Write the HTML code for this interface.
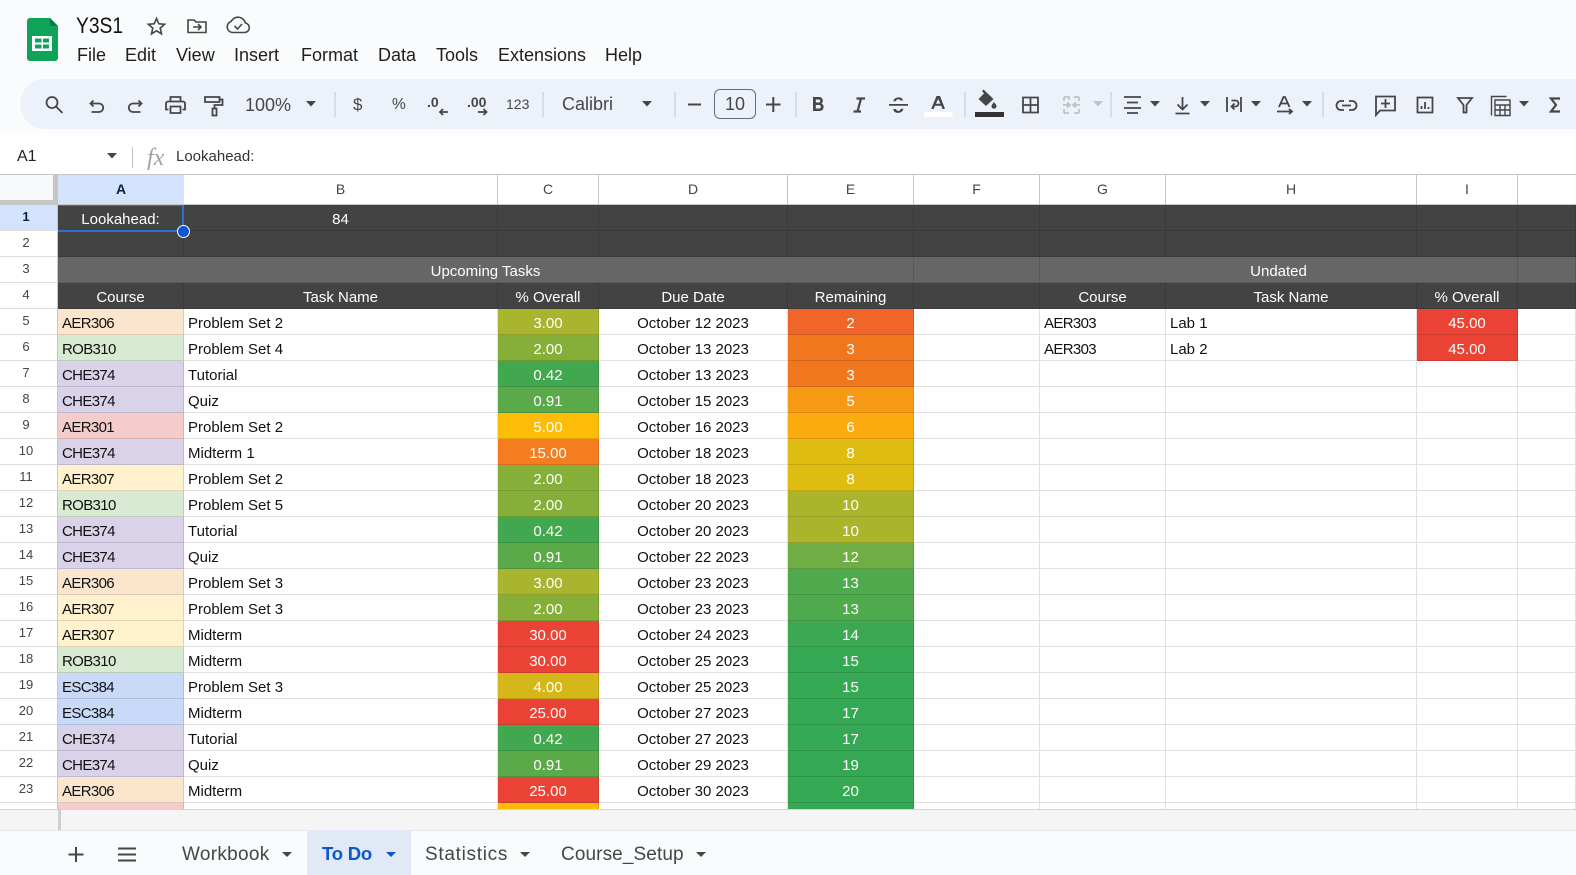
<!DOCTYPE html>
<html><head><meta charset="utf-8"><title>Y3S1</title>
<style>
*{box-sizing:border-box}
html,body{margin:0;padding:0;width:1576px;height:875px;overflow:hidden;background:#f9fbfd;font-family:"Liberation Sans",sans-serif;color:#1f1f1f}
.t{position:absolute;white-space:nowrap;line-height:1}
.m{font-size:18px;color:#1f1f1f;top:46px}
.tb{position:absolute;left:20px;top:79px;width:1556px;height:50px;background:#edf2fa;border-radius:25px 0 0 25px}
.fade{position:absolute;left:0;top:129px;width:1576px;height:10px;background:linear-gradient(#f9fbfd,#fff)}
.fb{position:absolute;left:0;top:139px;width:1576px;height:35px;background:#fff}
.g{color:#444746}
.colh{position:absolute;top:174px;height:31px;background:#fff;border-top:1px solid #c4c7c5;border-right:1px solid #c4c7c5;border-bottom:1px solid #c4c7c5;text-align:center;font-size:14px;line-height:28px;color:#444}
.wrap{position:absolute;left:0;top:205px;width:1576px;height:604px;overflow:hidden;background:#fff}
table{border-collapse:separate;border-spacing:0;table-layout:fixed;width:1576px;font-size:15px;color:#111}
td{height:26px;padding:4px 4px 0;border-right:1px solid rgba(0,0,0,.12);border-bottom:1px solid rgba(0,0,0,.12);white-space:nowrap;overflow:hidden;line-height:21px}
td.r{background:#fff;color:#444;font-size:13px;text-align:center;padding:0 5px 2px 0;border-right:1px solid #c4c7c5;border-bottom:1px solid #ddd;line-height:23px}
td.c{text-align:center}
.d td:not(.r){background:#434343;color:#fff;text-align:center}
.e td:not(.r){background:#666;color:#fff;text-align:center}
td.v{color:#fff;text-align:center}
.a6,.rb,.ch,.a1,.a7,.es,.k{letter-spacing:-.65px}
.a6{background:#fce5cd}.rb{background:#d9ead3}.ch{background:#d9d2e9}.a1{background:#f4cccc}.a7{background:#fff2cc}.es{background:#c9daf8}
.tabs{position:absolute;left:0;top:830px;width:1576px;height:45px;background:#f9fbfd;border-top:1px solid #e6e8ea}
.tab{font-size:19px;color:#444746;top:845px;letter-spacing:.4px}
svg{position:absolute;left:0;top:0;overflow:visible}
</style></head>
<body>
<svg width="1576" height="140" style="z-index:3">
<path d="M30 18h20l8 8v32a3 3 0 0 1-3 3H30a3 3 0 0 1-3-3V21a3 3 0 0 1 3-3z" fill="#0fa35a"/>
<path d="M50 18l8 8h-8z" fill="#0b7a43"/>
<path d="M32 36h20v15H32zM35 38.500v4h6.500v-4zM43 38.500v4h6v-4zM35 44.500v4h6.500v-4zM43 44.500v4h6v-4z" fill="#fff" fill-rule="evenodd"/>
<g fill="none" stroke="#444746" stroke-width="1.600">
<path d="M156.500 18.500l2.300 5.300 5.800.5-4.400 3.800 1.300 5.700-5-3-5 3 1.300-5.700-4.400-3.800 5.800-.5z"/>
<path d="M188 32.500V20h6l2 2h10v10.500z"/><path d="M193 27h8M198 24l3 3-3 3"/>
<path d="M232 32.500h12.500a4.800 4.800 0 0 0 1-9.500 7.800 7.800 0 0 0-14.500-1.500 5.700 5.700 0 0 0 1 11z"/><path d="M234.500 26l3 3 4.500-5"/>
</g>
<g fill="none" stroke="#444746" stroke-width="1.800">
<circle cx="52" cy="102.500" r="5.500"/><path d="M56 106.500l6.500 6.500"/>
<path d="M93.500 100.500l-3 3 3 3M90.500 103.500h8.500a4 4 0 0 1 0 8.500h-7.500"/>
<path d="M138.500 100.500l3 3-3 3M141.500 103.500H133a4 4 0 0 0 0 8.500h7.500"/>
<path d="M170.500 102v-5h10v5M168.500 109.500H166v-6a2 2 0 0 1 2-2h15a2 2 0 0 1 2 2v6h-2.500M170.500 106.500h10v6.500h-10z"/>
<path d="M205 97h14.500v5H205zM219.500 99.500h3v5.500h-8v3.500M212.500 108.500h4v7h-4z"/>
<path d="M688 104.500h13M766 104.500h14.500M773.300 97v15" stroke-width="2"/>
<path d="M1023 97.500h15v15h-15zM1030.500 97.500v15M1023 105h15"/>
<path d="M1124 97h17M1127 102.500h11M1124 108h17M1127 113h11"/>
<path d="M1182.500 97v12M1177.500 104.500l5 5 5-5M1175.500 113.500h14"/>
<path d="M1227 97v15M1241 97v15M1231.500 100.500h4a3 3 0 0 1 0 6h-3.500M1234.500 103.500l-3 3 3 3"/>
<path d="M1279 107l4.500-10h1.500l4.500 10M1280.500 103.500h7.500M1277 111.500h14M1289 109l3 2.500-3 2.500"/>
<path d="M1344 101h-3a4.500 4.500 0 0 0 0 9h3M1349 101h3a4.500 4.500 0 0 1 0 9h-3M1342 105.500h9"/>
<path d="M1376 96.500h19v14h-15l-4 4.500zM1385.500 99v9M1381 103.500h9"/>
<path d="M1417.500 97.500h15v15h-15zM1421.500 109v-3M1425 109v-7M1428.500 109v-2"/>
<path d="M1458 98h14l-5.500 7v7.500h-3V105z"/>
<path d="M1491.500 115.500V96.500h15M1495 100h15v15.500h-15zM1495 105h15M1495 110h15M1500 105v10.500M1505 105v10.500" stroke-width="1.400"/>
<path d="M1560 98.500h-9l5 6.500-5 6.500h9" stroke-width="2.200"/>
<path d="M448 112h-8M443 109l-3 3 3 3"/>
<path d="M478 112h8.500M483.500 109l3 3-3 3"/>
<path d="M856.500 98.500h8.500M861 98.500l-3.500 13M853.500 111.500h7.500" stroke-width="2.200"/>
</g>
<g fill="none" stroke="#bfc3c6" stroke-width="1.800">
<path d="M1064 97h5v3M1064 97v4M1064 113h5M1064 113v-4M1079 97h-5M1079 97v4M1079 113h-5M1079 113v-4M1063 105h6M1067 102.500l3 2.500-3 2.500M1080 105h-6M1076 102.500l-3 2.500 3 2.500"/>
</g>
<g fill="#444746">
<path d="M813 97h6a3.700 3.700 0 0 1 2.500 6.500 4 4 0 0 1-2 7.500H813zM815.800 99.500v3h3a1.500 1.500 0 0 0 0-3zM815.800 105v3.500h3.300a1.700 1.700 0 0 0 0-3.500z" fill-rule="evenodd"/>
<path d="M889 104h19v1.800h-19zM893.500 101.500c0-5 9-5.500 9.500-1h-2.500c-.8-2-4.500-1.500-4.500.5zM903.300 108.500c0 5.500-10 6-10 .5h2.700c.4 2.500 4.600 2.500 4.600 0z"/>
<path d="M936.500 96h3.500l5 13h-2.500l-1.200-3.300h-6.400l-1.200 3.300h-2.500zM938.200 99l-2.300 4.700h4.500z" fill-rule="evenodd"/>
<rect x="975" y="112" width="29" height="5" fill="#333"/>
<path d="M982 91l1.500-1.500 10 9.500-7.500 7-7.500-7 5.500-5.500zM994 102c1.500 2 2.500 3 2.500 4.200a2.400 2.400 0 0 1-5 0c0-1.200 1-2.200 2.500-4.200z"/>
<path d="M306 101h10l-5 5.500z"/><path d="M642 101h10l-5 5.500z"/>
<path d="M1150 101h10l-5 5.500z"/><path d="M1200 101h10l-5 5.500z"/><path d="M1251 101h10l-5 5.500z"/><path d="M1302 101h10l-5 5.500z"/><path d="M1519 101h10l-5 5.500z"/>
</g>
<path d="M1093 101h10l-5 5.500z" fill="#bfc3c6"/>
<rect x="924" y="112" width="28.500" height="5" fill="#fff"/>
<g fill="#c4c7cb">
<rect x="334.500" y="92" width="1" height="25"/><rect x="542.500" y="92" width="1" height="25"/><rect x="674.500" y="92" width="1" height="25"/><rect x="795.500" y="92" width="1" height="25"/><rect x="964.500" y="92" width="1" height="25"/><rect x="1110.500" y="92" width="1" height="25"/><rect x="1322.500" y="92" width="1" height="25"/>
</g>
</svg>
<div class="t" style="left:76px;top:15px;font-size:22px;color:#111;transform:scaleX(.875);transform-origin:left top">Y3S1</div>
<div class="t m" style="left:77px">File</div>
<div class="t m" style="left:125px">Edit</div>
<div class="t m" style="left:176px">View</div>
<div class="t m" style="left:234px">Insert</div>
<div class="t m" style="left:301px">Format</div>
<div class="t m" style="left:378px">Data</div>
<div class="t m" style="left:436px">Tools</div>
<div class="t m" style="left:498px">Extensions</div>
<div class="t m" style="left:605px">Help</div>
<div class="tb"></div><div class="fade"></div><div class="fb"></div>
<div class="t g" style="left:245px;top:96px;font-size:18px;z-index:4">100%</div>
<div class="t g" style="left:353px;top:96px;font-size:17px;z-index:4">$</div>
<div class="t g" style="left:392px;top:97px;font-size:15.500px;z-index:4">%</div>
<div class="t g" style="left:427px;top:95px;font-size:14px;font-weight:bold;z-index:4">.0</div>
<div class="t g" style="left:467px;top:95px;font-size:14px;font-weight:bold;z-index:4">.00</div>
<div class="t g" style="left:506px;top:97px;font-size:14px;z-index:4">123</div>
<div class="t g" style="left:562px;top:95px;font-size:18px;z-index:4">Calibri</div>
<div style="position:absolute;left:714px;top:89px;width:42px;height:30px;border:1px solid #6a6e72;border-radius:6px;text-align:center;line-height:28px;font-size:18px;color:#444746;z-index:4">10</div>
<div class="t" style="left:17px;top:149px;font-size:16px;color:#222;z-index:4">A1</div>
<div style="position:absolute;left:132px;top:147px;width:1px;height:21px;background:#c4c7cb;z-index:4"></div>
<div class="t" style="left:147px;top:145px;font:italic 24px 'Liberation Serif',serif;color:#a0a2a4;z-index:4">fx</div>
<div class="t" style="left:176px;top:149px;font-size:15px;color:#333;z-index:4">Lookahead:</div>
<svg width="1576" height="175" style="z-index:5"><path d="M107 153h10l-5 5.500z" fill="#444746"/></svg>

<div style="position:absolute;left:0;top:174px;width:58px;height:31px;background:#f8f9fa;border-top:1px solid #c4c7c5"></div>
<div style="position:absolute;left:0;top:200px;width:58px;height:5px;background:#c4c7c5"></div>
<div style="position:absolute;left:53px;top:174px;width:5px;height:31px;background:#c4c7c5"></div>
<div class="colh" style="left:58px;width:126px;background:#d3e3fd;font-weight:bold;color:#0b1f3f;border-right:none">A</div>
<div class="colh" style="left:184px;width:314px">B</div>
<div class="colh" style="left:498px;width:101px">C</div>
<div class="colh" style="left:599px;width:189px">D</div>
<div class="colh" style="left:788px;width:126px">E</div>
<div class="colh" style="left:914px;width:126px">F</div>
<div class="colh" style="left:1040px;width:126px">G</div>
<div class="colh" style="left:1166px;width:251px">H</div>
<div class="colh" style="left:1417px;width:101px">I</div>
<div class="colh" style="left:1518px;width:58px;border-right:none"></div>

<div class="wrap">
<table>
<colgroup><col style="width:58px"><col style="width:126px"><col style="width:314px"><col style="width:101px"><col style="width:189px"><col style="width:126px"><col style="width:126px"><col style="width:126px"><col style="width:251px"><col style="width:101px"><col style="width:58px"></colgroup>
<tr class="d"><td class="r" style="background:#d3e3fd;font-weight:bold;color:#0b1f3f">1</td><td>Lookahead:</td><td>84</td><td></td><td></td><td></td><td></td><td></td><td></td><td></td><td></td></tr>
<tr class="d"><td class="r">2</td><td></td><td></td><td></td><td></td><td></td><td></td><td></td><td></td><td></td><td></td></tr>
<tr class="e"><td class="r">3</td><td colspan="5">Upcoming Tasks</td><td></td><td colspan="3">Undated</td><td></td></tr>
<tr class="d"><td class="r">4</td><td>Course</td><td>Task Name</td><td>% Overall</td><td>Due Date</td><td>Remaining</td><td></td><td>Course</td><td>Task Name</td><td>% Overall</td><td></td></tr>
<tr><td class="r">5</td><td class="a6">AER306</td><td>Problem Set 2</td><td class="v" style="background:#a9b52e">3.00</td><td class="c">October 12 2023</td><td class="v" style="background:#f0662a">2</td><td></td><td class="k">AER303</td><td>Lab 1</td><td class="v" style="background:#ea4335">45.00</td><td></td></tr>
<tr><td class="r">6</td><td class="rb">ROB310</td><td>Problem Set 4</td><td class="v" style="background:#85af38">2.00</td><td class="c">October 13 2023</td><td class="v" style="background:#f1771f">3</td><td></td><td class="k">AER303</td><td>Lab 2</td><td class="v" style="background:#ea4335">45.00</td><td></td></tr>
<tr><td class="r">7</td><td class="ch">CHE374</td><td>Tutorial</td><td class="v" style="background:#42a84f">0.42</td><td class="c">October 13 2023</td><td class="v" style="background:#f1771f">3</td><td></td><td></td><td></td><td></td><td></td></tr>
<tr><td class="r">8</td><td class="ch">CHE374</td><td>Quiz</td><td class="v" style="background:#5aaa4a">0.91</td><td class="c">October 15 2023</td><td class="v" style="background:#f69a15">5</td><td></td><td></td><td></td><td></td><td></td></tr>
<tr><td class="r">9</td><td class="a1">AER301</td><td>Problem Set 2</td><td class="v" style="background:#fdbd07">5.00</td><td class="c">October 16 2023</td><td class="v" style="background:#fbab0d">6</td><td></td><td></td><td></td><td></td><td></td></tr>
<tr><td class="r">10</td><td class="ch">CHE374</td><td>Midterm 1</td><td class="v" style="background:#f57d20">15.00</td><td class="c">October 18 2023</td><td class="v" style="background:#dfbc11">8</td><td></td><td></td><td></td><td></td><td></td></tr>
<tr><td class="r">11</td><td class="a7">AER307</td><td>Problem Set 2</td><td class="v" style="background:#85af38">2.00</td><td class="c">October 18 2023</td><td class="v" style="background:#dfbc11">8</td><td></td><td></td><td></td><td></td><td></td></tr>
<tr><td class="r">12</td><td class="rb">ROB310</td><td>Problem Set 5</td><td class="v" style="background:#85af38">2.00</td><td class="c">October 20 2023</td><td class="v" style="background:#abb52b">10</td><td></td><td></td><td></td><td></td><td></td></tr>
<tr><td class="r">13</td><td class="ch">CHE374</td><td>Tutorial</td><td class="v" style="background:#42a84f">0.42</td><td class="c">October 20 2023</td><td class="v" style="background:#abb52b">10</td><td></td><td></td><td></td><td></td><td></td></tr>
<tr><td class="r">14</td><td class="ch">CHE374</td><td>Quiz</td><td class="v" style="background:#5aaa4a">0.91</td><td class="c">October 22 2023</td><td class="v" style="background:#6fad45">12</td><td></td><td></td><td></td><td></td><td></td></tr>
<tr><td class="r">15</td><td class="a6">AER306</td><td>Problem Set 3</td><td class="v" style="background:#a9b52e">3.00</td><td class="c">October 23 2023</td><td class="v" style="background:#4fa94d">13</td><td></td><td></td><td></td><td></td><td></td></tr>
<tr><td class="r">16</td><td class="a7">AER307</td><td>Problem Set 3</td><td class="v" style="background:#85af38">2.00</td><td class="c">October 23 2023</td><td class="v" style="background:#4fa94d">13</td><td></td><td></td><td></td><td></td><td></td></tr>
<tr><td class="r">17</td><td class="a7">AER307</td><td>Midterm</td><td class="v" style="background:#ea4335">30.00</td><td class="c">October 24 2023</td><td class="v" style="background:#3ca851">14</td><td></td><td></td><td></td><td></td><td></td></tr>
<tr><td class="r">18</td><td class="rb">ROB310</td><td>Midterm</td><td class="v" style="background:#ea4335">30.00</td><td class="c">October 25 2023</td><td class="v" style="background:#34a853">15</td><td></td><td></td><td></td><td></td><td></td></tr>
<tr><td class="r">19</td><td class="es">ESC384</td><td>Problem Set 3</td><td class="v" style="background:#d5b719">4.00</td><td class="c">October 25 2023</td><td class="v" style="background:#34a853">15</td><td></td><td></td><td></td><td></td><td></td></tr>
<tr><td class="r">20</td><td class="es">ESC384</td><td>Midterm</td><td class="v" style="background:#ea4335">25.00</td><td class="c">October 27 2023</td><td class="v" style="background:#34a853">17</td><td></td><td></td><td></td><td></td><td></td></tr>
<tr><td class="r">21</td><td class="ch">CHE374</td><td>Tutorial</td><td class="v" style="background:#42a84f">0.42</td><td class="c">October 27 2023</td><td class="v" style="background:#34a853">17</td><td></td><td></td><td></td><td></td><td></td></tr>
<tr><td class="r">22</td><td class="ch">CHE374</td><td>Quiz</td><td class="v" style="background:#5aaa4a">0.91</td><td class="c">October 29 2023</td><td class="v" style="background:#34a853">19</td><td></td><td></td><td></td><td></td><td></td></tr>
<tr><td class="r">23</td><td class="a6">AER306</td><td>Midterm</td><td class="v" style="background:#ea4335">25.00</td><td class="c">October 30 2023</td><td class="v" style="background:#34a853">20</td><td></td><td></td><td></td><td></td><td></td></tr>
<tr><td class="r"></td><td class="a1"></td><td></td><td class="v" style="background:#fdbd07"></td><td></td><td class="v" style="background:#34a853"></td><td></td><td></td><td></td><td></td><td></td></tr>
</table>
</div>
<div style="position:absolute;left:58px;top:205px;width:126px;height:27px;border-top:1px solid #3a6fb8;border-right:2px solid #2f6fd0;border-bottom:2px solid #2f6fd0"></div>
<div style="position:absolute;left:176.500px;top:225px;width:13px;height:13px;border-radius:50%;background:#0b57d0;border:1.500px solid #fff"></div>

<div style="position:absolute;left:0;top:809px;width:1576px;height:21px;background:#f5f5f5;border-top:1px solid #d4d4d4"></div>
<div style="position:absolute;left:58px;top:809px;width:2.500px;height:21px;background:#cfcfcf"></div>
<div class="tabs"></div>
<div style="position:absolute;left:307px;top:830px;width:104px;height:45px;background:#e1e9f7"></div>
<div class="t tab" style="left:182px;letter-spacing:.3px">Workbook</div>
<div class="t tab" style="left:322px;color:#0b57d0;font-weight:bold;letter-spacing:-.2px;font-size:18.500px">To Do</div>
<div class="t tab" style="left:425px;letter-spacing:.7px">Statistics</div>
<div class="t tab" style="left:561px;letter-spacing:.1px">Course_Setup</div>
<svg width="1576" height="875" style="z-index:5">
<g stroke="#444746" stroke-width="2" fill="none"><path d="M76 847v15M68.500 854.500h15"/><path d="M118 848.500h18M118 854.500h18M118 860.500h18"/></g>
<path d="M282 852h10l-5 5z" fill="#444746"/>
<path d="M386 852h10l-5 5z" fill="#0b57d0"/>
<path d="M520 852h10l-5 5z" fill="#444746"/>
<path d="M696 852h10l-5 5z" fill="#444746"/>
</svg>
</body></html>
